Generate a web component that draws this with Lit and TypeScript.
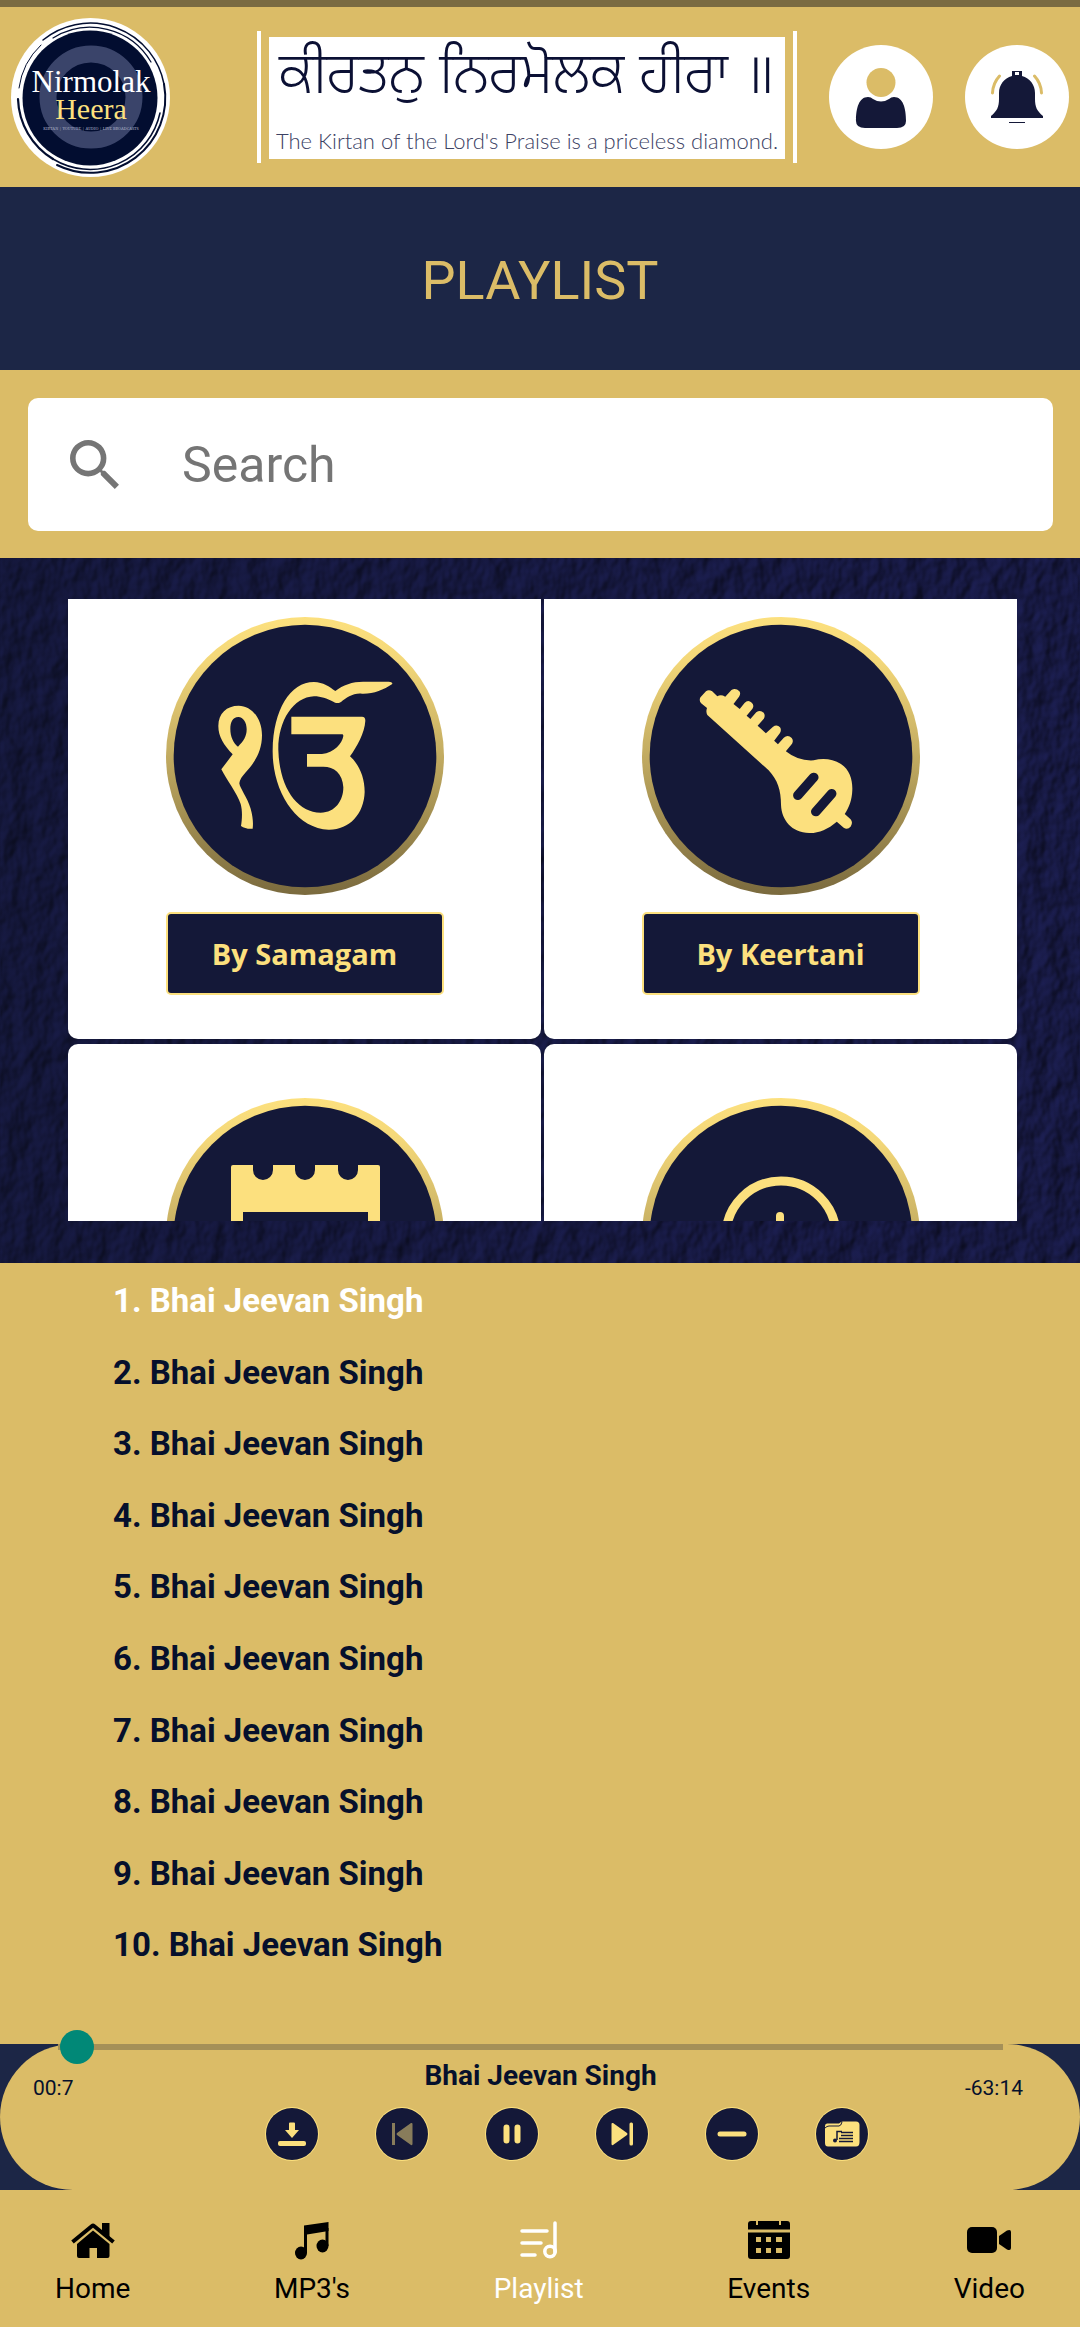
import { LitElement, html, svg, css, nothing, type SVGTemplateResult } from "lit";
import { customElement, property, state } from "lit/decorators.js";

interface Tile {
  name: string;
  label?: string;
  art: SVGTemplateResult;
}

const onkar = svg`
  <g transform="translate(-318 -81)" fill="#fce07e">
    <path fill-rule="evenodd" d="M536 347C574 347 606 384 606 436C606 488 580 522 556 548C546 560 539 568 538 580C540 596 562 622 572 656C579 682 580 700 578 716C566 718 552 714 543 708C546 690 548 664 542 642C532 612 498 566 484 538L518 493C492 466 475 440 475 408C475 370 500 347 536 347ZM535 381C518 381 511 398 511 416C511 440 520 458 534 470C550 454 560 440 560 418C560 398 550 381 535 381Z"/>
    <path d="M997 282C970 300 940 312 906 311C880 308 858 324 844 335C838 340 826 340 820 335C800 326 784 319 762 319C700 322 654 392 655 480C658 590 710 668 782 668C826 668 850 632 850 592C848 550 822 530 790 530H741V492H786C822 488 846 462 850 438C850 434 848 433 845 433H694V380H906C913 380 916 384 916 392C914 430 890 470 870 499C896 522 914 560 914 606C912 672 868 720 806 719C706 716 636 600 638 480C640 360 690 276 762 276C790 277 808 290 826 303C850 284 880 274 914 275H986C993 275 998 278 997 282Z"/>
  </g>`;

const rabab = svg`
  <g transform="translate(-306 -81) scale(1.033 1)">
    <path fill="#fce07e" d="M466 322L482 304Q490 297 500 304L515 319Q525 312 538 320L556 300Q568 292 579 304Q584 311 578 320L562 342L580 357L594 339Q604 328 615 338Q623 346 617 356L600 377L611 387L628 367Q640 358 650 369Q655 377 650 386L632 407L656 430L676 411Q688 402 697 412Q702 420 697 429L680 452L691 463L708 443Q720 433 731 444Q737 452 732 461L714 484Q750 514 795 511C820 504 850 506 874 522C900 540 908 570 907 600C906 630 898 652 885 672L902 688Q910 698 902 710Q893 720 882 713L862 695C836 718 808 730 782 729C730 728 702 690 700 646C700 600 690 570 664 541L486 375Q481 366 485 354L468 340Q461 332 466 322Z"/>
    <path fill="none" stroke="#141838" stroke-width="28" stroke-linecap="round" d="M749 616L795 562M801 665L847 611"/>
  </g>`;

const calendar = svg`
  <g transform="scale(3)">
    <path fill="#fce07e" fill-rule="evenodd" d="M67 67H87V72A10 10 0 0 0 107 72V67H129V72A10 10 0 0 0 149 72V67H172V72A10 10 0 0 0 192 72V67H212Q214 67 214 69V208Q214 212 210 212H69Q65 212 65 208V69Q65 67 67 67ZM77 114V200H202V114Z"/>
  </g>`;

const clock = svg`
  <g transform="scale(3)" fill="none" stroke="#fce07e" stroke-linecap="round">
    <circle cx="139" cy="138" r="55" stroke-width="9"/>
    <path stroke-width="8" d="M138 118V140L158 152"/>
  </g>`;

const TILES: Tile[] = [
  { name: "By Samagam", label: "By Samagam", art: onkar },
  { name: "By Keertani", label: "By Keertani", art: rabab },
  { name: "By Date", art: calendar },
  { name: "By Time", art: clock },
];

@customElement("category-tile")
class CategoryTile extends LitElement {
  @property() name = "";
  @property() label = "";
  @property({ attribute: false }) art?: SVGTemplateResult;

  static styles = css`
    :host { display: block; }
    .tile {
      display: flex; flex-direction: column; align-items: center; gap: 17px;
      width: 100%; height: 476px; padding: 54px 0 0; border: 0; border-radius: 10px;
      background: #fff; font-family: "Open Sans", "Noto Sans", sans-serif; cursor: pointer;
    }
    .art { display: block; width: 278px; height: 278px; flex: none; }
    .label {
      box-sizing: border-box; width: 278px; height: 83px; border: 2px solid #fce07e; border-radius: 5px;
      background: #141838; color: #fce07e; font-weight: 700; font-size: 29px; line-height: 79px;
    }
  `;

  render() {
    return html`
      <button class="tile" aria-label=${this.name}>
        <svg class="art" viewBox="0 0 834 834" aria-hidden="true">
          <defs>
            <linearGradient id="rim" x1="0" y1="0" x2="0" y2="1">
              <stop offset="0" stop-color="#fce07e" />
              <stop offset="0.15" stop-color="#f4d879" />
              <stop offset="1" stop-color="#7a6a3e" />
            </linearGradient>
          </defs>
          <circle cx="417" cy="417" r="417" fill="url(#rim)" />
          <circle cx="417" cy="417" r="394" fill="#141838" />
          ${this.art}
        </svg>
        ${this.label ? html`<span class="label">${this.label}</span>` : nothing}
      </button>`;
  }
}

const disc = svg`<circle cx="27" cy="27" r="27" fill="#fce07e"/><circle cx="27" cy="27" r="26" fill="#141838"/>`;

const CONTROLS: { name: string; off?: boolean; art: SVGTemplateResult }[] = [
  { name: "Download", art: svg`<path fill="#fce07e" d="M25 15.500H29Q30 15.500 30 16.500V23H34L27 31L20 23H24V16.500Q24 15.500 25 15.500Z"/><rect x="13" y="34" width="28" height="5" rx="2" fill="#fce07e"/>` },
  { name: "Previous", off: true, art: svg`<path fill="#fce07e" d="M17 16H20V38H17ZM22 26L36 16Q37.500 15.500 37.500 17V37Q37.500 38.500 36 38L22 28Q21 27 22 26Z"/>` },
  { name: "Pause", art: svg`<path stroke="#fce07e" stroke-width="6" stroke-linecap="round" d="M21.500 20.500V33.500M32.500 20.500V33.500"/>` },
  { name: "Next", art: svg`<path fill="#fce07e" d="M18 16L32 26Q33 27 32 28L18 38Q16.500 38.500 16.500 37V17Q16.500 15.500 18 16Z"/><rect x="34.500" y="15.500" width="3.500" height="23" rx="1.500" fill="#fce07e"/>` },
  { name: "Minimise", art: svg`<rect x="12.500" y="24.500" width="29" height="5" rx="2.500" fill="#fce07e"/>` },
  {
    name: "Playlist folder", art: svg`
    <path fill="#fce07e" d="M10 19Q10 16.500 12 16.500H24L26 15Q27 14.500 28 14.500H41Q44.500 14.500 44.500 18V35Q44.500 39.500 41 39.500H13Q10 39.500 10 36Z"/>
    <path fill="none" stroke="#141838" stroke-width="1" d="M10 21Q12 19 14 19H24Q26 19 27 15"/>
    <path fill="none" stroke="#141838" stroke-width="1.500" d="M26 25.500H38M26 28.500H38M24 31.500H38M24 34.500H38M27 24.500H22V33"/>
    <circle cx="20" cy="33.500" r="2" fill="#141838"/>` },
];

const NAV: { name: string; art: SVGTemplateResult }[] = [
  { name: "Home", art: svg`<path fill="none" stroke="currentColor" stroke-width="4" stroke-linejoin="round" d="M1.500 20L21 4Q22 3.200 23 4L42.500 20"/><path fill="currentColor" d="M31 1H38.500V16L31 10ZM22 8.500L38.500 22V34Q38.500 36 36.500 36H26V26H18.500V36H8Q6 36 6 34V22Z"/>` },
  { name: "MP3's", art: svg`<path fill="currentColor" d="M14 3.500L38.500 0V9L14 13Z"/><path fill="none" stroke="currentColor" stroke-width="3" d="M15.500 10V31M37 6V24"/><ellipse cx="11" cy="31" rx="6" ry="6.500" fill="currentColor"/><ellipse cx="32.500" cy="24" rx="6" ry="6.500" fill="currentColor"/>` },
  { name: "Playlist", art: svg`<path fill="none" stroke="currentColor" stroke-width="3.500" stroke-linecap="round" d="M5 9H30M5 21H24M5 33H18M38 1V30"/><circle cx="33" cy="29.500" r="5.200" fill="none" stroke="currentColor" stroke-width="3.500"/>` },
  { name: "Events", art: svg`<path fill="currentColor" fill-rule="evenodd" d="M4 -1H9V3H11V-1H32V3H34V-1H40Q43 -1 43 2V7.500H1V2Q1 -1 4 -1ZM1 10.500H43V34Q43 37 40 37H4Q1 37 1 34ZM9 15V20H14V15ZM19 15V20H24V15ZM29 15V20H35V15ZM9 26V31H14V26ZM19 26V31H24V26ZM29 26V31H35V26Z"/>` },
  { name: "Video", art: svg`<rect x="0" y="5" width="30" height="26" rx="5" fill="currentColor"/><path fill="currentColor" d="M32 14L40 8.500Q44 7 44 10V26Q44 29 40 27.500L32 22Z"/>` },
];

@customElement("app-root")
class AppRoot extends LitElement {
  @state() private track = 0;
  @state() private tab = 2;

  static styles = css`
    :host {
      display: flex; flex-direction: column; min-height: 100vh;
      background: #dbbc67; color: #06102c; font-family: Roboto, "Liberation Sans", sans-serif;
    }
    button, input { font-family: inherit; margin: 0; }
    button { padding: 0; border: 0; background: none; cursor: pointer; }
    svg { display: block; }

    .status { height: 7px; background: #7a6b42; }
    .header { display: flex; align-items: center; height: 180px; padding: 0 11px; }
    .logo { width: 159px; height: 159px; flex: none; margin-right: 87px; }
    .banner {
      flex: 1; min-width: 0; box-sizing: border-box; height: 132px; margin-right: 32px; padding: 6px 8px 4px;
      border: solid #fff; border-width: 0 4px 0 4px; display: flex;
    }
    .verse {
      flex: 1; min-width: 0; display: flex; flex-direction: column; align-items: center; justify-content: space-between;
      background: #fff; color: #0b1034; white-space: nowrap;
    }
    .gurmukhi { font-family: "Noto Sans Gurmukhi", "Lohit Gurmukhi", "Noto Sans", sans-serif; font-weight: 300; font-size: 57px; line-height: 84px; }
    .english { font-family: Lato, sans-serif; font-weight: 300; font-size: 22px; line-height: 36px; color: #3c4264; }
    .round { width: 104px; height: 104px; flex: none; border-radius: 50%; background: #fff; }
    .round + .round { margin-left: 32px; }

    .title {
      margin: 0; background: #1c2646; color: #dbbc67; text-align: center;
      font-weight: 400; font-size: 54px; line-height: 183px; padding-top: 2px; height: 181px;
    }
    .search { padding: 28px 27px 27px 28px; }
    .field { display: flex; align-items: center; height: 133px; border-radius: 10px; background: #fff; }
    .lens { margin: 0 63px 0 42px; flex: none; }
    .query { flex: 1; min-width: 0; height: 100%; padding: 0; border: 0; outline: 0; background: none; font-size: 50px; color: #333; }
    .query::placeholder { color: #757575; opacity: 1; }

    .browse { position: relative; padding: 41px 63px 42px 68px; background: #12163c; overflow: hidden; }
    .wall { position: absolute; inset: 0; width: 100%; height: 100%; }
    .tiles {
      position: relative; display: grid; grid-template-columns: 1fr 1fr; gap: 5px 3px; align-content: start;
      height: 622px; overflow-y: auto; scrollbar-width: none;
    }

    .tracks { flex: 1; display: grid; grid-auto-rows: 1fr; margin: 0; padding: 3px 0 62px 113px; list-style: none; }
    .track { color: inherit; font-weight: 700; font-size: 33px; line-height: 70px; text-align: left; }
    .track.on { color: #fff; }

    .player { background: #1c2646; }
    .pill { box-sizing: border-box; height: 146px; border-radius: 73px; background: #dbbc67; display: flex; flex-direction: column; }
    .seek {
      appearance: none; -webkit-appearance: none; display: block; height: 34px; flex: none;
      margin: -14px 77px -14px 58px; background: none; cursor: pointer;
    }
    .seek::-webkit-slider-runnable-track { height: 6px; background: #a59058; }
    .seek::-webkit-slider-thumb { -webkit-appearance: none; width: 34px; height: 34px; margin-top: -14px; border-radius: 50%; background: #018877; }
    .info { box-sizing: border-box; display: grid; grid-template-columns: 1fr auto 1fr; height: 57px; padding: 6px 57px 0 33px; line-height: 40px; }
    .time { font-size: 21px; padding-top: 19px; line-height: 26px; }
    .left { text-align: right; }
    .now { font-weight: 700; font-size: 28px; margin-left: 25px; }
    .controls { display: flex; justify-content: center; gap: 56px; padding-left: 54px; }
    .off svg path { opacity: 0.5; }

    .nav { display: flex; justify-content: space-between; align-items: flex-start; height: 105px; padding: 32px 55px 0; }
    .tab { display: flex; flex-direction: column; align-items: center; gap: 14px; text-decoration: none; color: #000; font-size: 28px; line-height: 32px; }
    .tab svg { overflow: visible; }
    .tab.on { color: #fff; }
  `;

  // The tiles get their height from their own shadow content, so wait for it before scrolling.
  async firstUpdated() {
    const tiles = this.renderRoot.querySelector(".tiles") as HTMLElement;
    await Promise.all(Array.from(tiles.children, (t) => (t as LitElement).updateComplete));
    tiles.scrollTop = 36;
  }

  private logo() {
    return html`
      <svg class="logo" viewBox="0 0 159 159" role="img" aria-label="Nirmolak Heera">
        <circle cx="79.500" cy="79.500" r="79.500" fill="#fff" />
        <circle cx="79" cy="80" r="67.500" fill="#020d30" />
        <circle cx="80" cy="79" r="43" fill="none" stroke="#3a446a" stroke-width="17" />
        <g fill="none" stroke="#020d30" stroke-linecap="round">
          <path stroke-width="1.500" d="M32 22A75 75 0 0 1 153 66" />
          <path stroke-width="1.200" d="M42 20A70.500 70.500 0 0 1 140 44" />
          <path stroke-width="2" d="M153 66A75 75 0 0 1 46 147" />
          <path stroke-width="1.500" d="M149 95A71.500 71.500 0 0 1 42 141" />
          <path stroke-width="2.200" d="M7 81A73 73 0 0 0 42 141" />
          <path stroke-width="1" d="M8 70A72 72 0 0 1 30 27" />
        </g>
        <g text-anchor="middle" font-family="'Liberation Serif', serif">
          <text x="80" y="74" font-size="31" fill="#fff">Nirmolak</text>
          <text x="80" y="101" font-size="30" fill="#fce07e">Heera</text>
        </g>
        <text x="80" y="112" text-anchor="middle" font-family="'Noto Serif', 'Liberation Serif', serif" font-size="4" fill="#a9aec4">KIRTAN | YOUTUBE | AUDIO | LIVE BROADCASTS</text>
      </svg>`;
  }

  render() {
    return html`
      <div class="status"></div>
      <header class="header">
        ${this.logo()}
        <div class="banner">
          <div class="verse">
            <span class="gurmukhi" lang="pa">ਕੀਰਤਨੁ ਨਿਰਮੋਲਕ ਹੀਰਾ ॥</span>
            <span class="english">The Kirtan of the Lord's Praise is a priceless diamond.</span>
          </div>
        </div>
        <button class="round" aria-label="Profile">
          <svg width="104" height="104" viewBox="0 0 104 104">
            <circle cx="52" cy="37.500" r="14.500" fill="#dbbc67" />
            <path fill="#141838" d="M27 76C27 63 30 52 39 52Q42 52 44 54Q52 59 60 54Q62 52 65 52C74 52 77 63 77 76Q77 83 68 83H36Q27 83 27 76Z" />
          </svg>
        </button>
        <button class="round" aria-label="Notifications">
          <svg width="104" height="104" viewBox="0 0 104 104">
            <path fill="#141838" fill-rule="evenodd" d="M47 26H57V31C65 33 70 40 70 48V54C70 62 72 66 78 71V73H26V71C32 66 34 62 34 54V48C34 40 39 33 47 31ZM50 27V30H54V27Z" />
            <path fill="#141838" d="M44 77H60V78H44Z" />
            <path fill="none" stroke="#dbbc67" stroke-width="3" stroke-linecap="round" d="M34.500 31Q28 38 27.500 48M69.500 31Q76 38 76.500 48" />
          </svg>
        </button>
      </header>
      <h1 class="title">PLAYLIST</h1>
      <div class="search">
        <div class="field">
          <svg class="lens" width="49" height="49" viewBox="3 3 17.500 17.500" aria-hidden="true">
            <path fill="#757575" d="M15.500 14h-.79l-.28-.27A6.471 6.471 0 0 0 16 9.500 6.500 6.500 0 1 0 9.500 16c1.610 0 3.090-.59 4.230-1.570l.27.28v.79l5 4.990L20.490 19l-4.990-5zm-6 0C7.010 14 5 11.990 5 9.500S7.010 5 9.500 5 14 7.010 14 9.500 11.990 14 9.500 14z" />
          </svg>
          <input class="query" type="search" placeholder="Search" aria-label="Search" />
        </div>
      </div>
      <section class="browse">
        <svg class="wall" aria-hidden="true">
          <defs>
            <filter id="plaster" x="0" y="0" width="100%" height="100%" color-interpolation-filters="sRGB">
              <feTurbulence type="fractalNoise" baseFrequency="0.05 0.036" numOctaves="3" seed="8" result="n" />
              <feDiffuseLighting in="n" surfaceScale="4" diffuseConstant="0.72" lighting-color="#2b2f7c">
                <feDistantLight azimuth="215" elevation="45" />
              </feDiffuseLighting>
            </filter>
            <linearGradient id="shade" x1="0" x2="1">
              <stop offset="0" stop-color="#10142f" stop-opacity="0.45" />
              <stop offset="1" stop-color="#181a48" stop-opacity="0.2" />
            </linearGradient>
          </defs>
          <rect width="100%" height="100%" filter="url(#plaster)" />
          <rect width="100%" height="100%" fill="url(#shade)" />
        </svg>
        <div class="tiles">
          ${TILES.map((t) => html`<category-tile .name=${t.name} .label=${t.label ?? ""} .art=${t.art}></category-tile>`)}
        </div>
      </section>
      <ol class="tracks">
        ${Array.from({ length: 10 }, (_, i) => html`
          <li><button class="track ${i === this.track ? "on" : ""}" @click=${() => (this.track = i)}>${i + 1}. Bhai Jeevan Singh</button></li>`)}
      </ol>
      <section class="player">
        <div class="pill">
          <input class="seek" type="range" min="0" max="3801" value="7" aria-label="Seek" />
          <div class="info">
            <span class="time">00:7</span>
            <strong class="now">Bhai Jeevan Singh</strong>
            <span class="time left">-63:14</span>
          </div>
          <div class="controls">
            ${CONTROLS.map((c) => html`
              <button class=${c.off ? "off" : ""} aria-label=${c.name} ?disabled=${c.off}>
                <svg width="54" height="54" viewBox="0 0 54 54">${disc}${c.art}</svg>
              </button>`)}
          </div>
        </div>
      </section>
      <nav class="nav">
        ${NAV.map((n, i) => html`
          <a class="tab ${i === this.tab ? "on" : ""}" href="#${n.name.toLowerCase()}" @click=${() => (this.tab = i)}>
            <svg width="44" height="37" viewBox="0 0 44 37" aria-hidden="true">${n.art}</svg>${n.name}
          </a>`)}
      </nav>`;
  }
}
